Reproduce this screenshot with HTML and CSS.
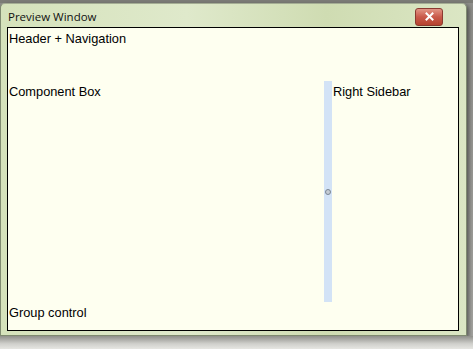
FILE: index.html
```html
<!DOCTYPE html>
<html lang="en">
<head>
  <meta charset="UTF-8" />
  <title>Preview Window</title>
  <link rel="stylesheet" href="styles.css">
</head>
<body>
  <div class="window">
    <div class="titlebar">
      <span class="title">Preview Window</span>
      <button class="close" title="Close">
        <svg width="9" height="9" viewBox="0 0 9 9">
          <path d="M1.5 1.5 L7.5 7.5 M7.5 1.5 L1.5 7.5" stroke="#fff" stroke-width="2" stroke-linecap="square" />
        </svg>
      </button>
    </div>
    <div class="client">
      <div class="header">Header + Navigation</div>
      <div class="main">
        <div class="component">Component Box</div>
        <div class="splitter"><span class="grip"></span></div>
        <div class="sidebar">Right Sidebar</div>
      </div>
      <div class="footer">Group control</div>
    </div>
  </div>
  <div class="taskbar"></div>
</body>
</html>
```

FILE: styles.css
```css
body {
  margin: 0;
  height: 349px;
  overflow: hidden;
  background: linear-gradient(to bottom, #7c7c77 0, #7c7c77 3px, #8e8e8a 3px, #a4a4a0 100%);
  font-family: "Liberation Sans", Arial, sans-serif;
  font-size: 12.8px;
  color: #000;
}

.window {
  margin-top: 3px;
  width: 467px;
  height: 333px;
  box-sizing: border-box;
  padding: 0 7px 4px 6px;
  border: 1px solid #7f8a70;
  border-top-color: #a4ad94;
  border-radius: 5px 5px 0 0;
  background: linear-gradient(to right, #d5e2bb, #dfe9cb 40%, #cfdcb2 70%, #dbe6c4);
  box-shadow: 2px 2px 4px rgba(0, 0, 0, 0.45);
  display: flex;
  flex-direction: column;
}

.titlebar {
  height: 23px;
  display: flex;
  align-items: center;
  justify-content: space-between;
  flex-shrink: 0;
}

.title {
  font-family: "Open Sans", "DejaVu Sans", sans-serif;
  font-size: 11.5px;
  padding-left: 1px;
  padding-top: 1px;
  color: #111;
}

.close {
  width: 28px;
  height: 18px;
  margin-right: 16px;
  margin-top: 2px;
  padding: 0;
  border: 1px solid #8b3a30;
  border-radius: 3px;
  background: linear-gradient(to bottom, #e29585, #c9594a 50%, #b6432f);
  display: flex;
  align-items: center;
  justify-content: center;
}

.client {
  flex: 1;
  border: 1px solid #000;
  background: #fefff0;
  display: flex;
  flex-direction: column;
}

.header {
  height: 53px;
  padding: 3px 0 0 1px;
  box-sizing: border-box;
}

.main {
  height: 221px;
  display: flex;
}

.component {
  width: 315px;
  padding: 3px 0 0 1px;
}

.splitter {
  width: 8px;
  background: #d3e3f6;
  display: flex;
  align-items: center;
  justify-content: center;
}

.grip {
  width: 4px;
  height: 4px;
  border: 1px solid #7a8694;
  border-radius: 50%;
  background: #c5ccd4;
}

.sidebar {
  flex: 1;
  padding: 3px 0 0 1px;
}

.footer {
  flex: 1;
  padding: 3px 0 0 1px;
}

.taskbar {
  height: 13px;
  background: linear-gradient(to bottom, #8f8f8a, #d0d0cc 60%, #e6e6e2);
}
```
